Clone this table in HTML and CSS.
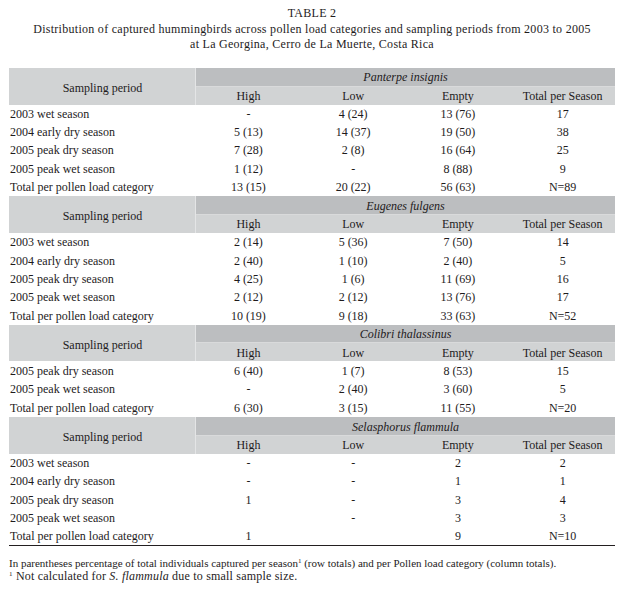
FILE: index.html
```html
<!DOCTYPE html>
<html lang="en">
<head>
<meta charset="utf-8">
<title>Table 2</title>
<link rel="stylesheet" href="styles.css">
</head>
<body>
<div class="page">
  <div class="caption">
    <div>TABLE 2</div>
    <div>Distribution of captured hummingbirds across pollen load categories and sampling periods from 2003 to 2005</div>
    <div>at La Georgina, Cerro de La Muerte, Costa Rica</div>
  </div>
  <table class="data">
    <colgroup>
      <col class="c-period"><col class="c-num"><col class="c-num"><col class="c-num"><col class="c-num">
    </colgroup>
    <tbody>
      <tr class="h-species"><th rowspan="2" class="period-head">Sampling period</th><th colspan="4" class="species">Panterpe insignis</th></tr>
      <tr class="h-cols"><th>High</th><th>Low</th><th>Empty</th><th>Total per Season</th></tr>
      <tr><td>2003 wet season</td><td>-</td><td>4 (24)</td><td>13 (76)</td><td>17</td></tr>
      <tr><td>2004 early dry season</td><td>5 (13)</td><td>14 (37)</td><td>19 (50)</td><td>38</td></tr>
      <tr><td>2005 peak dry season</td><td>7 (28)</td><td>2 (8)</td><td>16 (64)</td><td>25</td></tr>
      <tr><td>2005 peak wet season</td><td>1 (12)</td><td>-</td><td>8 (88)</td><td>9</td></tr>
      <tr><td>Total per pollen load category</td><td>13 (15)</td><td>20 (22)</td><td>56 (63)</td><td>N=89</td></tr>

      <tr class="h-species"><th rowspan="2" class="period-head">Sampling period</th><th colspan="4" class="species">Eugenes fulgens</th></tr>
      <tr class="h-cols"><th>High</th><th>Low</th><th>Empty</th><th>Total per Season</th></tr>
      <tr><td>2003 wet season</td><td>2 (14)</td><td>5 (36)</td><td>7 (50)</td><td>14</td></tr>
      <tr><td>2004 early dry season</td><td>2 (40)</td><td>1 (10)</td><td>2 (40)</td><td>5</td></tr>
      <tr><td>2005 peak dry season</td><td>4 (25)</td><td>1 (6)</td><td>11 (69)</td><td>16</td></tr>
      <tr><td>2005 peak wet season</td><td>2 (12)</td><td>2 (12)</td><td>13 (76)</td><td>17</td></tr>
      <tr><td>Total per pollen load category</td><td>10 (19)</td><td>9 (18)</td><td>33 (63)</td><td>N=52</td></tr>

      <tr class="h-species"><th rowspan="2" class="period-head">Sampling period</th><th colspan="4" class="species">Colibri thalassinus</th></tr>
      <tr class="h-cols"><th>High</th><th>Low</th><th>Empty</th><th>Total per Season</th></tr>
      <tr class="r3"><td>2005 peak dry season</td><td>6 (40)</td><td>1 (7)</td><td>8 (53)</td><td>15</td></tr>
      <tr class="r3"><td>2005 peak wet season</td><td>-</td><td>2 (40)</td><td>3 (60)</td><td>5</td></tr>
      <tr class="r3"><td>Total per pollen load category</td><td>6 (30)</td><td>3 (15)</td><td>11 (55)</td><td>N=20</td></tr>

      <tr class="h-species"><th rowspan="2" class="period-head">Sampling period</th><th colspan="4" class="species">Selasphorus flammula</th></tr>
      <tr class="h-cols"><th>High</th><th>Low</th><th>Empty</th><th>Total per Season</th></tr>
      <tr><td>2003 wet season</td><td>-</td><td>-</td><td>2</td><td>2</td></tr>
      <tr><td>2004 early dry season</td><td>-</td><td>-</td><td>1</td><td>1</td></tr>
      <tr><td>2005 peak dry season</td><td>1</td><td>-</td><td>3</td><td>4</td></tr>
      <tr><td>2005 peak wet season</td><td></td><td>-</td><td>3</td><td>3</td></tr>
      <tr class="last"><td>Total per pollen load category</td><td>1</td><td></td><td>9</td><td>N=10</td></tr>
    </tbody>
  </table>
  <div class="notes">
    <p>In parentheses percentage of total individuals captured per season<sup>1</sup> (row totals) and per Pollen load category (column totals).</p>
    <p class="note-2"><sup>1</sup> Not calculated for <i>S. flammula</i> due to small sample size.</p>
  </div>
</div>
</body>
</html>
```
FILE: styles.css
```css
html, body {
  margin: 0;
  padding: 0;
  background: #ffffff;
}

.page {
  font-family: "Liberation Serif", "Times New Roman", serif;
  color: #1e1b1c;
  font-size: 12px;
  padding: 6px 9px 0 9px;
  width: 606px;
}

.caption {
  text-align: center;
  line-height: 15.5px;
  letter-spacing: 0.28px;
  margin-bottom: 15.5px;
}

.data {
  width: 606px;
  table-layout: fixed;
  border-collapse: separate;
  border-spacing: 0;
  font-size: 12px;
  line-height: 14px;
}

.c-period { width: 187px; }
.c-num { width: 104.75px; }

.data th,
.data td {
  padding: 0;
  vertical-align: middle;
  text-align: center;
  font-weight: normal;
}

.data td:first-child {
  text-align: left;
  padding-left: 1px;
}

.data tr { height: 18.4px; }
.data tr.r3 { height: 18.67px; }

.data tr.h-species { height: 18.5px; }
.data tr.h-cols { height: 18px; }

.period-head {
  background: #d1d3d4;
  box-shadow: inset -1px 0 0 #e4e5e6;
  padding-top: 3px !important;
}

.species {
  background: #bcbec0;
  font-style: italic;
  box-shadow: inset 0 -1px 0 #d9dadb;
}

.h-cols th {
  background: #d1d3d4;
  padding-top: 1px !important;
}

.data tr.last td {
  border-bottom: 1px solid #231f20;
}

.notes {
  margin-top: 11px;
  font-size: 11px;
  line-height: 13px;
}

.notes p {
  margin: 0;
}

.notes .note-2 {
  font-size: 12px;
  letter-spacing: 0.2px;
}

.notes sup {
  font-size: 7px;
  line-height: 0;
  vertical-align: 4px;
}
```
